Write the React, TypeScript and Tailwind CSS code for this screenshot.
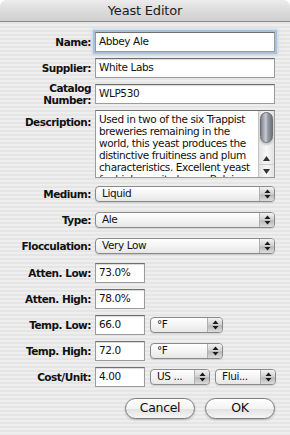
const font = "font-['DejaVu_Sans',sans-serif]";

function Arrows() {
  return (
    <svg width="7" height="10" viewBox="0 0 7 10" className="block">
      <path d="M3.5 0.5 L6.5 4 L0.5 4 Z" fill="#1a1a1a" />
      <path d="M3.5 9.5 L6.5 6 L0.5 6 Z" fill="#1a1a1a" />
    </svg>
  );
}

function Label({ children }: { children: React.ReactNode }) {
  return (
    <div className="w-[91px] shrink-0 text-right text-[10.5px] leading-[12px] font-bold text-[#111] tracking-[-0.5px]">
      {children}
    </div>
  );
}

function Field({ value, w = "w-[180px]", focus = false }: { value: string; w?: string; focus?: boolean }) {
  return (
    <div
      className={`${w} h-[20px] ml-[4px] bg-white border border-[#9b9b9b] border-t-[#6f6f6f] flex items-center pl-[3px] text-[10.5px] text-[#111] tracking-[-0.4px] ${
        focus ? "shadow-[0_0_0_2px_#a9c1dd,0_0_3px_3px_#c6d5e6]" : "shadow-[inset_0_1px_1px_rgba(0,0,0,0.15)]"
      }`}
    >
      {value}
    </div>
  );
}

function Popup({ value, w = "w-[180px]", ml = "ml-[4px]" }: { value: string; w?: string; ml?: string }) {
  return (
    <div
      className={`${w} ${ml} h-[16px] rounded-[4px] border border-[#8a8a8a] bg-[linear-gradient(#ffffff,#f4f4f4_50%,#e6e6e6)] flex items-stretch overflow-hidden shadow-[0_1px_1px_rgba(0,0,0,0.12)]`}
    >
      <div className="flex-1 pl-[6px] flex items-center text-[10.5px] text-[#111] tracking-[-0.4px] whitespace-nowrap overflow-hidden">
        {value}
      </div>
      <div className="w-[15px] border-l border-[#b0b0b0] bg-[linear-gradient(#f2f2f2,#cfcfcf_50%,#b9b9b9_55%,#dcdcdc)] flex items-center justify-center">
        <Arrows />
      </div>
    </div>
  );
}

function Button({ children }: { children: React.ReactNode }) {
  return (
    <div className="w-[70px] h-[21px] rounded-full border border-[#7c7c7c] bg-[linear-gradient(#ffffff,#f3f3f3_50%,#e2e2e2_55%,#f6f6f6)] flex items-center justify-center text-[12.5px] text-[#111] tracking-[-0.3px] shadow-[0_1px_2px_rgba(0,0,0,0.25)]">
      {children}
    </div>
  );
}

export default function App() {
  const lines = [
    "Used in two of the six Trappist",
    "breweries remaining in the",
    "world, this yeast produces the",
    "distinctive fruitiness and plum",
    "characteristics. Excellent yeast",
    "for high gravity beers, Belgian",
  ];
  return (
    <div className={`w-[290px] h-[435px] overflow-hidden bg-white ${font}`}>
      <div className="w-[290px] h-[435px] rounded-t-[7px] overflow-hidden flex flex-col bg-[repeating-linear-gradient(180deg,#eeeeee_0px,#eeeeee_2px,#e5e5e5_2px,#e5e5e5_4px)]">
        <div className="h-[22px] shrink-0 bg-[linear-gradient(#ececec,#dcdcdc_50%,#cfcfcf)] border-b border-[#8a8a8a] flex items-center justify-center text-[13px] text-[#1a1a1a] tracking-[-0.2px]">
          Yeast Editor
        </div>

        <div className="flex flex-col">
          <div className="mt-[10px] flex items-center h-[20px]">
            <Label>Name:</Label>
            <Field value="Abbey Ale" focus />
          </div>
          <div className="mt-[6px] flex items-center h-[20px]">
            <Label>Supplier:</Label>
            <Field value="White Labs" />
          </div>
          <div className="mt-[6px] flex items-center h-[20px]">
            <Label>
              Catalog
              <br />
              Number:
            </Label>
            <Field value="WLP530" />
          </div>

          <div className="mt-[6px] flex items-start h-[68px]">
            <div className="pt-[6px]">
              <Label>Description:</Label>
            </div>
            <div className="w-[180px] h-[68px] ml-[4px] bg-white border border-[#9b9b9b] border-t-[#6f6f6f] flex">
              <div className="flex-1 overflow-hidden pl-[3px] pt-[2px] text-[10.5px] leading-[12px] text-[#111] tracking-[-0.4px]">
                {lines.map((l) => (
                  <div key={l} className="whitespace-nowrap">
                    {l}
                  </div>
                ))}
              </div>
              <div className="w-[16px] border-l border-[#c4c4c4] bg-[linear-gradient(90deg,#e2e2e2,#f8f8f8_50%,#e2e2e2)] flex flex-col items-center">
                <div className="mt-[1px] w-[13px] h-[31px] rounded-full border border-[#6b6e74] bg-[linear-gradient(90deg,#7e838b,#c9ced6_45%,#9aa0a8_60%,#6e737b)] shadow-[0_2px_2px_rgba(0,0,0,0.2)]" />
                <div className="flex-1" />
                <div className="w-full h-[12px] flex items-center justify-center border-b border-[#d0d0d0]">
                  <svg width="7" height="5" viewBox="0 0 7 5">
                    <path d="M3.5 0 L7 5 L0 5 Z" fill="#333" />
                  </svg>
                </div>
                <div className="w-full h-[12px] flex items-center justify-center">
                  <svg width="7" height="5" viewBox="0 0 7 5">
                    <path d="M3.5 5 L7 0 L0 0 Z" fill="#333" />
                  </svg>
                </div>
              </div>
            </div>
          </div>

          <div className="mt-[8px] flex items-center h-[16px]">
            <Label>Medium:</Label>
            <Popup value="Liquid" />
          </div>
          <div className="mt-[10px] flex items-center h-[16px]">
            <Label>Type:</Label>
            <Popup value="Ale" />
          </div>
          <div className="mt-[10px] flex items-center h-[16px]">
            <Label>Flocculation:</Label>
            <Popup value="Very Low" />
          </div>

          <div className="mt-[9px] flex items-center h-[20px]">
            <Label>Atten. Low:</Label>
            <Field value="73.0%" w="w-[50px]" />
          </div>
          <div className="mt-[6px] flex items-center h-[20px]">
            <Label>Atten. High:</Label>
            <Field value="78.0%" w="w-[50px]" />
          </div>
          <div className="mt-[6px] flex items-center h-[20px]">
            <Label>Temp. Low:</Label>
            <Field value="66.0" w="w-[50px]" />
            <Popup value="°F" w="w-[73px]" ml="ml-[5px]" />
          </div>
          <div className="mt-[6px] flex items-center h-[20px]">
            <Label>Temp. High:</Label>
            <Field value="72.0" w="w-[50px]" />
            <Popup value="°F" w="w-[73px]" ml="ml-[5px]" />
          </div>
          <div className="mt-[6px] flex items-center h-[20px]">
            <Label>Cost/Unit:</Label>
            <Field value="4.00" w="w-[50px]" />
            <Popup value="US ..." w="w-[60px]" ml="ml-[5px]" />
            <Popup value="Flui..." w="w-[61px]" ml="ml-[5px]" />
          </div>

          <div className="mt-[11px] flex justify-end gap-[10px] pr-[15px]">
            <Button>Cancel</Button>
            <Button>OK</Button>
          </div>
        </div>
      </div>
    </div>
  );
}
